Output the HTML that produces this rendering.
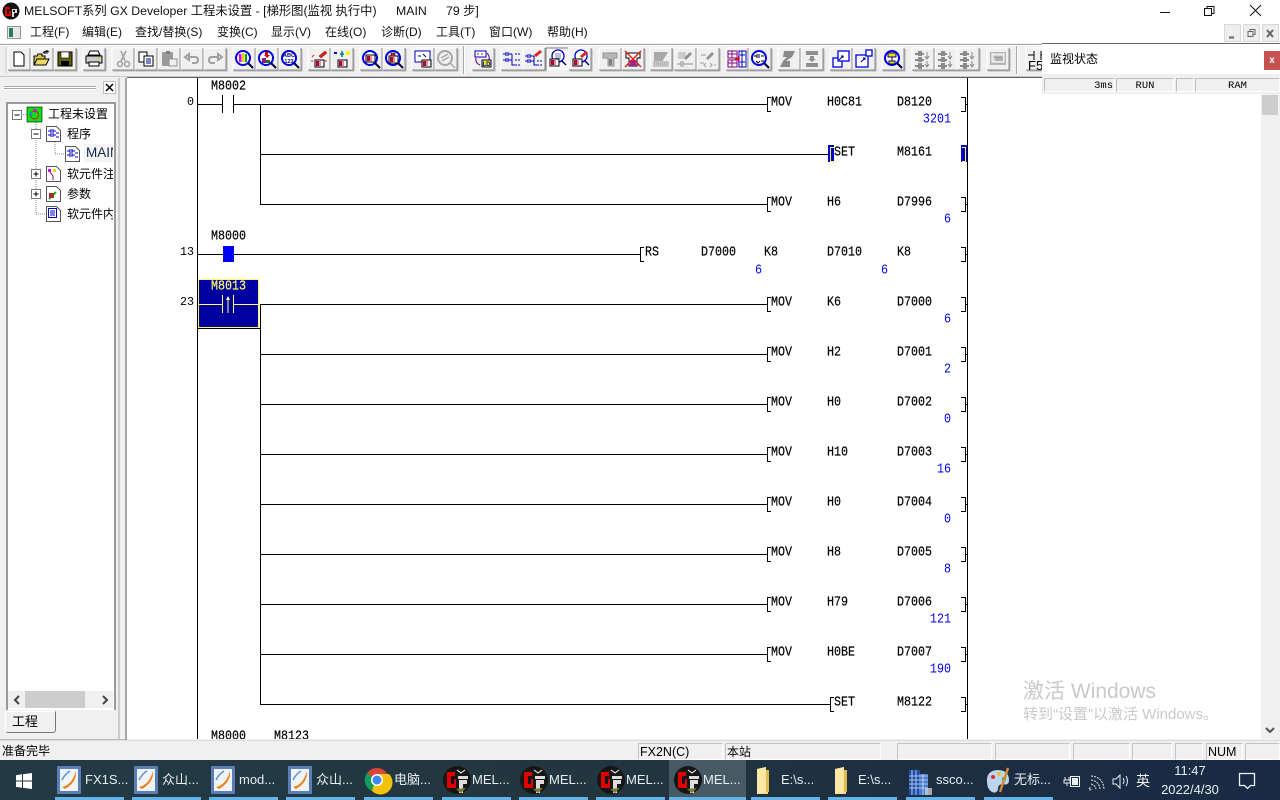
<!DOCTYPE html>
<html><head><meta charset="utf-8"><style>
*{box-sizing:border-box}
html,body{margin:0;padding:0;width:1280px;height:800px;overflow:hidden;background:#f0f0f0}
body{position:relative;font-family:"Liberation Sans","Noto Sans CJK SC",sans-serif;font-size:12px;color:#000}
.a{position:absolute;white-space:nowrap}
.m{position:absolute;top:24px;line-height:16px;font-size:12px;color:#111}
.c{position:absolute;top:743px;height:17px;border:1px solid #c4c4c4;border-right-color:#fff;border-bottom-color:#fff;line-height:16px;font-size:13px;padding-left:1px;overflow:hidden}
.t{position:absolute;top:771px;line-height:18px;font-size:13px;color:#e8eef2;white-space:nowrap}
.u{position:absolute;top:797px;height:3px;background:#63b3e8}
svg text{white-space:pre}
.lad text{font-family:"Liberation Mono",monospace;font-size:11.7px;fill:#000;stroke:#000;stroke-width:.15px;transform-box:fill-box;transform-origin:center;transform:translateY(-1px) scaleY(1.2)}
.lad .v{fill:#0000f0;stroke:none;text-anchor:end;transform:scaleY(1.15)}
.lad .n{text-anchor:end;stroke:none;transform:translateY(-1px)}
.lad .y{fill:#ffff60;stroke:#ffff60}
</style></head><body>

<!-- title + menu -->
<div class="a" style="left:0;top:0;width:1280px;height:44px;background:#fff"></div>
<svg class="a" style="left:2px;top:2px" width="18" height="18" viewBox="0 0 18 18"><circle cx="9" cy="9" r="8.500" fill="#111"/><path d="M3 5h5v2H5v5h2V9h2v5H3z" fill="#e00000"/><path d="M10 7h5v4h-3v4h-2z" fill="#ddd"/><rect x="11" y="8" width="2" height="2" fill="#111"/></svg>
<div class="a" style="left:24px;top:3px;line-height:17px;font-size:12.300px;color:#111">MELSOFT系列 GX Developer 工程未设置 - [梯形图(监视 执行中)</div>
<div class="a" style="left:396px;top:3px;line-height:17px;font-size:12.300px;color:#111">MAIN</div>
<div class="a" style="left:446px;top:3px;line-height:17px;font-size:12.300px;color:#111">79 步]</div>
<svg class="a" style="left:1150px;top:0" width="130" height="24"><path d="M10 12.500h10" stroke="#111" fill="none"/><path d="M54.500 8.500h7v7h-7zM57 8.500v-2h7v7h-2.500" stroke="#111" fill="none"/><path d="M100 5l11 11M111 5l-11 11" stroke="#111" fill="none"/></svg>

<svg class="a" style="left:7px;top:25px" width="15" height="15"><rect x="0.500" y="1.500" width="13" height="12" fill="#e8e8e8" stroke="#8a9aa0"/><rect x="2" y="3" width="4" height="9" fill="#2c7a5a"/><rect x="7" y="3" width="5" height="9" fill="#dfe8ee"/></svg>
<div class="m" style="left:30px">工程(F)</div><div class="m" style="left:82px">编辑(E)</div><div class="m" style="left:135px">查找/替换(S)</div><div class="m" style="left:217px">变换(C)</div><div class="m" style="left:271px">显示(V)</div><div class="m" style="left:325px">在线(O)</div><div class="m" style="left:381px">诊断(D)</div><div class="m" style="left:436px">工具(T)</div><div class="m" style="left:489px">窗口(W)</div><div class="m" style="left:547px">帮助(H)</div>

<svg class="a" style="left:1222px;top:24px" width="58" height="19"><g fill="#eee" stroke="#d8d8d8"><rect x="2.500" y="0.500" width="16" height="17"/><rect x="21.500" y="0.500" width="16" height="17"/><rect x="40.500" y="0.500" width="16" height="17"/></g><path d="M7 13.500h5" stroke="#666" stroke-width="2"/><path d="M26 7.500h5v5h-5zM28 7.500v-2h5v5h-2" stroke="#666" fill="none"/><path d="M45 6l6 7M51 6l-6 7" stroke="#666" stroke-width="2"/></svg>

<!-- toolbar -->
<svg class="a" style="left:0;top:43px" width="1280" height="36" viewBox="0 43 1280 36">
<defs>
<g id="b"><rect x="-11" y="-11" width="22" height="22" fill="#f0f0f0"/><path d="M-11 11V-11H11" fill="none" stroke="#fff"/><path d="M-11 11H11V-11" fill="none" stroke="#8c8c8c"/><path d="M-10 12H12V-10" fill="none" stroke="#b0b0b0"/></g>
<g id="z"><circle cx="-1" cy="-1" r="7" fill="#fff" stroke="#0000e0" stroke-width="2"/><path d="M4 4l5 5" stroke="#000040" stroke-width="2"/></g>
<g id="r"><rect x="-4" y="0" width="9" height="7" fill="#f8f8f8" stroke="#000"/><rect x="-3" y="1" width="3" height="5" fill="#b00030"/><rect x="0" y="1" width="2" height="5" fill="#e090a0"/></g>
<g id="g1"><path d="M-8-5h4M-2-5h3M-8 1h4M-2 1h3M-8 7h4M-2 7h3M-4-8v5M-2-8v5M-4-2v5M-2-2v5M-4 4v6M-2 4v6" stroke="#8a8a8a" stroke-width="2" fill="none"/><path d="M4-7v6M2-3l2 3 2-3M4 2v6M2 5l2 3 2-3" stroke="#8a8a8a" fill="none"/></g>
</defs>
<rect x="0" y="43" width="1280" height="36" fill="#f0f0f0"/>
<path d="M0 44.500H1042" stroke="#a8a8a8"/><path d="M0 45.500H1042" stroke="#fff"/>
<path d="M0 76.500H1042" stroke="#c8c8c8"/><path d="M127 77.500H1042" stroke="#606060"/>
<path d="M6 47v26" stroke="#c8c8c8"/><path d="M463.500 46v28" stroke="#a8a8a8"/><path d="M464.500 46v28" stroke="#fff"/><path d="M1016.500 46v28" stroke="#a8a8a8"/><path d="M1017.500 46v28" stroke="#fff"/>

<g transform="translate(19,59)"><use href="#b"/><path d="M-5-7h7l3 3v11h-10z" fill="#fff" stroke="#000"/></g>
<g transform="translate(42,59)"><use href="#b"/><path d="M-8 6V-3h3l1-2h4v2h3v9z" fill="#d8c850" stroke="#000"/><path d="M-8 6l3-6h12l-3 6z" fill="#e8d860" stroke="#000"/><path d="M1-6q3-3 6-1M5-9v3h-3" stroke="#000" fill="none"/></g>
<g transform="translate(65,59)"><use href="#b"/><rect x="-7" y="-7" width="14" height="14" fill="#606000" stroke="#000"/><rect x="-4" y="-7" width="8" height="6" fill="#fff" stroke="#000" stroke-width=".6"/><rect x="-4" y="2" width="8" height="5" fill="#000"/></g>
<g transform="translate(94,59)"><use href="#b"/><path d="M-4-8h8l2 4h-12z" fill="#fff" stroke="#000"/><rect x="-8" y="-3" width="16" height="7" fill="#ccc" stroke="#000"/><rect x="-5" y="3" width="10" height="4" fill="#fff" stroke="#000"/><path d="M3-1h3" stroke="#cc0"/></g>
<g transform="translate(123,59)"><use href="#b"/><path d="M-2-8L2 2M3-8L-2 2" stroke="#a0a0a0" stroke-width="1.500" fill="none"/><circle cx="-3" cy="5" r="2.500" fill="none" stroke="#a0a0a0" stroke-width="1.500"/><circle cx="4" cy="5" r="2.500" fill="none" stroke="#a0a0a0" stroke-width="1.500"/></g>
<g transform="translate(146,59)"><use href="#b"/><rect x="-7" y="-7" width="8" height="10" fill="#fff" stroke="#000"/><rect x="-2" y="-3" width="9" height="10" fill="#fff" stroke="#000"/><path d="M0-0h5M0 2h5M0 4h5" stroke="#00008a"/></g>
<g transform="translate(169,59)"><use href="#b"/><rect x="-7" y="-7" width="11" height="14" fill="#9a9a9a" rx="1"/><rect x="-3" y="-8" width="4" height="3" fill="#808080"/><rect x="0" y="0" width="8" height="7" fill="#f0f0f0" stroke="#909090"/></g>
<g transform="translate(192,59)"><use href="#b"/><path d="M-7-2l4-3v6zM-4-2h7q3 0 3 3t-3 3h-3" fill="none" stroke="#a0a0a0" stroke-width="2"/></g>
<g transform="translate(215,59)"><use href="#b"/><path d="M7-2l-4-3v6zM4-2h-7q-3 0-3 3t3 3h3" fill="none" stroke="#a0a0a0" stroke-width="2"/></g>
<g transform="translate(244,59)"><use href="#b"/><use href="#z"/><rect x="-5" y="-5" width="2.500" height="8" fill="#e000e0"/><rect x="-2" y="-6" width="2.500" height="9" fill="#e8d000"/><rect x="1" y="-5" width="2" height="8" fill="#00a000"/></g>
<g transform="translate(267,59)"><use href="#b"/><use href="#z"/><path d="M-2-7h3v3h2l-3 3-3-3h1z" fill="#e00000"/><rect x="-5" y="-1" width="4" height="5" fill="#802080"/><rect x="-1" y="1" width="4" height="3" fill="#207030"/></g>
<g transform="translate(290,59)"><use href="#b"/><use href="#z"/><text x="-1" y="-2" font-size="5.500" font-family="Liberation Sans" text-anchor="middle" font-weight="bold" fill="#000080">ABC</text><text x="-1" y="4" font-size="5.500" font-family="Liberation Sans" text-anchor="middle" font-weight="bold" fill="#000080">123</text></g>
<g transform="translate(319,59)"><use href="#b"/><use href="#r" y="1"/><path d="M0-3l6-5 2 2-6 5z" fill="#e02020" stroke="#800000" stroke-width=".5"/><path d="M-7-2l2-2M-8 2h2M6 2h2" stroke="#e02020"/></g>
<g transform="translate(342,59)"><use href="#b"/><use href="#r" y="1"/><path d="M0-8v6M-2-5h4" stroke="#008080" stroke-width="1.500"/><circle cx="6" cy="-6" r="2" fill="#f0f000"/><path d="M-8-6h3" stroke="#0000e0" stroke-width="2"/></g>
<g transform="translate(371,59)"><use href="#b"/><use href="#z"/><use href="#r" x="-1" y="-4"/></g>
<g transform="translate(394,59)"><use href="#b"/><use href="#z"/><use href="#r" x="-1" y="-3"/><path d="M-3-6h4v3h-4z" fill="#c03040" stroke="#000" stroke-width=".6"/></g>
<g transform="translate(423,59)"><use href="#b"/><rect x="-8" y="-8" width="15" height="11" fill="#fff" stroke="#0000c0"/><path d="M-5-3h3M0-5l3 3" stroke="#000080"/><use href="#r" x="3" y="1"/></g>
<g transform="translate(446,59)"><use href="#b"/><circle cx="-1" cy="-1" r="7" fill="none" stroke="#a8a8a8" stroke-width="2"/><path d="M4 4l5 5M-5-1l7-4M-4 2l7-4" stroke="#a8a8a8" stroke-width="1.500"/></g>
<g transform="translate(483,59)"><use href="#b"/><rect x="-8" y="-8" width="11" height="6" fill="#fff" stroke="#0000c0"/><path d="M-6-5h2M-2-5h2" stroke="#e00000"/><path d="M4-6q4 4 1 10M-7-1q-1 5 4 7" fill="none" stroke="#800080"/><rect x="-1" y="1" width="9" height="7" fill="#f0f000" stroke="#000080"/><text x="3.500" y="7" font-size="6" font-family="Liberation Sans" text-anchor="middle" font-weight="bold" fill="#0000a0">LD</text></g>
<g transform="translate(512,59)"><use href="#b"/><path d="M-9-5h3M-4-5h4M-9 1h3M-4 1h4M-6-7v4M-4-7v4M-6-1v4M-4-1v4M0-5v11h3" stroke="#0000c0" fill="none"/><path d="M3-5h5M3 1h5M3 6h5" stroke="#0000c0" stroke-dasharray="2 1"/></g>
<g transform="translate(534,59)"><use href="#b"/><path d="M-9-3h3M-4-3h4M-9 2h3M-4 2h4M-6-5v4M-4-5v4M-6 0v4M-4 0v4M0-3v9h3" stroke="#0000c0" fill="none"/><path d="M3 2h5M3 6h5" stroke="#0000c0" stroke-dasharray="2 1"/><path d="M0-4l6-5 2 2-6 5z" fill="#e02020"/></g>
<g transform="translate(557,59)"><rect x="-11" y="-11" width="22" height="22" fill="#f8f8f8"/><path d="M-11 11V-11H11" fill="none" stroke="#808080"/><circle cx="1" cy="-3" r="6" fill="#fff" stroke="#0000c0" stroke-width="1.300"/><path d="M-2-5h6M-2-3h6M-2-1h6" stroke="#8080c0"/><path d="M5 2l4 4" stroke="#000080" stroke-width="1.500"/><use href="#r" x="-3" y="0"/></g>
<g transform="translate(580,59)"><use href="#b"/><circle cx="1" cy="-3" r="6" fill="#fff" stroke="#0000c0" stroke-width="1.300"/><path d="M5 2l4 4" stroke="#000080" stroke-width="1.500"/><use href="#r" x="-3" y="0"/><path d="M0-3l6-5 2 2-6 5z" fill="#e02020"/></g>
<g transform="translate(610,59)"><use href="#b"/><path d="M-7-6h14v5h-3v8h-6v-8h-5z" fill="#b8b8b8" stroke="#909090"/><rect x="-1" y="0" width="3" height="6" fill="#808080"/></g>
<g transform="translate(633,59)"><use href="#b"/><path d="M-7-6h14v5h-3v8h-8v-8h-3z" fill="#fff" stroke="#000"/><rect x="-3" y="1" width="6" height="6" fill="#a020a0"/><path d="M-8-8L8 8M8-8L-8 8" stroke="#e02020" stroke-width="1.500"/></g>
<g transform="translate(661,59)"><use href="#b"/><path d="M-7-7L7-7 1 3H-7z" fill="#a8a8a8"/><path d="M-8 2h16v6h-16z" fill="#c8c8c8"/><path d="M-7 4h14M-7 6h14" stroke="#a0a0a0" stroke-dasharray="1 1"/></g>
<g transform="translate(685,59)"><use href="#b"/><path d="M-7-7h8v7h-8z" fill="#ccc"/><path d="M-1-1l6-6 2 2-6 6z" fill="#909090"/><path d="M-8 5h4M-2 5h10M-4 2v6M-2 2v6" stroke="#909090"/></g>
<g transform="translate(708,59)"><use href="#b"/><path d="M-2-1l6-6 2 2-6 6z" fill="#909090"/><path d="M-7-4h5M-8 4h4M-2 4l-2 2 2 2M2 4l2 2-2 2M6 6h2" stroke="#a0a0a0" fill="none"/></g>
<g transform="translate(737,59)"><use href="#b"/><rect x="-9" y="-8" width="9" height="7" fill="#fff" stroke="#800080"/><rect x="-9" y="1" width="9" height="7" fill="#fff" stroke="#800080"/><path d="M-5-8v7M-9-5h9M-5 1v7M-9 4h9" stroke="#800080"/><rect x="2" y="-8" width="7" height="16" fill="#fff" stroke="#0000c0"/><path d="M3-4h5M3 3h5M5-8v16" stroke="#0000c0"/><path d="M-2-1h3v-2l2 3-2 3v-2h-3z" fill="#f00000"/></g>
<g transform="translate(760,59)"><use href="#b"/><use href="#z"/><path d="M-6-3h3M1-3h3M-3-5v4M-1-5v4" stroke="#000"/><path d="M-4 2l2 2 2-2M1 2h3" stroke="#000" fill="none"/></g>
<g transform="translate(789,59)"><use href="#b"/><path d="M-5-8h11l-3 6h-3l3 0-6 4h4v6h-10l3-6h3l-3 0 4-4h-4z" fill="#8a8a8a"/></g>
<g transform="translate(812,59)"><use href="#b"/><rect x="-6" y="-8" width="12" height="4" fill="#909090"/><rect x="-6" y="4" width="12" height="4" fill="#909090"/><path d="M-2-3h4v3h2l-4 3-4-3h2z" fill="#909090"/></g>
<g transform="translate(841,59)"><use href="#b"/><rect x="-8" y="-1" width="9" height="9" fill="#fff" stroke="#0000e0" stroke-width="1.300"/><rect x="-3" y="-8" width="11" height="10" fill="#fff" stroke="#0000e0" stroke-width="1.300"/><path d="M-2 1l4-4M0-3h2v2" stroke="#000080" fill="none"/></g>
<g transform="translate(864,59)"><use href="#b"/><rect x="-8" y="-4" width="12" height="12" fill="#fff" stroke="#0000e0" stroke-width="1.300"/><rect x="2" y="-9" width="6" height="6" fill="#fff" stroke="#0000e0" stroke-width="1.300"/><path d="M-3 3l4-4M-1-1h2v2" stroke="#000080" fill="none"/></g>
<g transform="translate(893,59)"><use href="#b"/><use href="#z"/><rect x="-5" y="-6" width="8" height="4" fill="#f0e000" stroke="#000080"/><rect x="-4" y="2" width="6" height="3" fill="#f0e000" stroke="#000080"/><path d="M-1-2v4" stroke="#000080"/></g>
<g transform="translate(923,59)"><use href="#b"/><use href="#g1"/></g>
<g transform="translate(946,59)"><use href="#b"/><use href="#g1"/></g>
<g transform="translate(968,59)"><use href="#b"/><use href="#g1"/></g>
<g transform="translate(998,59)"><use href="#b"/><rect x="-8" y="-7" width="16" height="13" fill="#b4b4b4"/><rect x="-6" y="-5" width="12" height="8" fill="#d8d8d8" stroke="#fff"/><path d="M-4-2h8v4M-2-2v4M0-2v4M2-2v4" stroke="#8a8a8a" fill="none"/></g>
<g transform="translate(1037,59)"><use href="#b"/><path d="M-9-4H-3M-3-8V1M4-8V1M4-4H9" stroke="#000" fill="none"/><text x="-9" y="11" font-size="13" font-family="Liberation Sans">F5</text></g>
</svg>

<!-- left panel -->
<div class="a" style="left:120px;top:78px;width:7px;height:662px;background:#f0f0f0"></div>
<div class="a" style="left:125px;top:78px;width:2px;height:662px;background:#a8a8a8"></div>
<svg class="a" style="left:0;top:78px" width="125" height="662">
<path d="M4 8.500H96M4 10.500H96" stroke="#a8a8a8"/><path d="M4 9.500H96M4 11.500H96" stroke="#fff"/>
<rect x="103.500" y="3.500" width="12" height="12" fill="#fff" stroke="#c0c0c0"/><path d="M106 6l7 7M113 6l-7 7" stroke="#000" stroke-width="1.500"/>
<rect x="6" y="24" width="110" height="608" fill="#fff"/><path d="M7 632V25H115V632" fill="none" stroke="#9a9a9a" stroke-width="2"/>
<rect x="118.500" y="0" width="1" height="662" fill="#a8a8a8"/>
</svg>
<div class="a" style="left:0;top:739px;width:125px;height:1px;background:#bbb"></div>

<!-- tree -->
<svg class="a" style="left:8px;top:102px" width="105" height="130" viewBox="8 102 105 130">
<g fill="none" stroke="#888" stroke-dasharray="1 1"><path d="M23 114.500h4M36 122v92M36 134h4M55 142v12h10M36 174h4M36 194h4M36 214h10"/></g>
<g fill="#fff" stroke="#777"><rect x="12.500" y="110.500" width="9" height="9"/><rect x="31.500" y="129.500" width="9" height="9"/><rect x="31.500" y="169.500" width="9" height="9"/><rect x="31.500" y="189.500" width="9" height="9"/></g>
<path d="M14.500 115h5M33.500 134h5M33.500 174h5M36 171.500v5M33.500 194h5M36 191.500v5" stroke="#000"/>
<rect x="27" y="107" width="15" height="15" fill="#10e010" stroke="#000" stroke-width=".6"/><circle cx="34.500" cy="115" r="4" fill="none" stroke="#d01040"/><path d="M29 114l2-2 2 2-2 2z" fill="#0090e0"/><path d="M33 108l4 2-2 3z" fill="#e000e0"/>
<g fill="#fff" stroke="#555"><path d="M46.500 126.500h10l4 4v11h-14z"/><path d="M65.500 146.500h10l4 4v11h-14z"/><path d="M46.500 166.500h10l4 4v11h-14z"/><path d="M46.500 186.500h10l4 4v11h-14z"/><path d="M46.500 206.500h10l4 4v11h-14z"/></g>
<g stroke="#0000c0" fill="none"><path d="M48 131h3M53 131h3M48 135h3M53 135h3M51 129v8M53 129v8M56 133h3M56 137h3"/><path d="M67 151h3M72 151h3M67 155h3M72 155h3M70 149v8M72 149v8M75 153h3M75 157h3"/><rect x="48.500" y="208.500" width="8" height="9"/><path d="M50 211h5M50 213h5M50 215h5"/></g>
<rect x="48" y="169" width="3" height="3" fill="#e000e0"/><rect x="53" y="169" width="3" height="3" fill="#e0e000"/><path d="M50 172l3 4v4" stroke="#800080" fill="none"/>
<path d="M49 199l7-7" stroke="#00c000" stroke-width="2"/><rect x="49" y="193" width="5" height="5" fill="#a03030"/>
</svg>
<div class="a" style="left:48px;top:106px;line-height:16px;font-size:12px;width:62px;overflow:hidden">工程未设置</div>
<div class="a" style="left:67px;top:126px;line-height:16px;font-size:12px">程序</div>
<div class="a" style="left:84px;top:144px;line-height:18px;font-size:13.500px;width:29px;overflow:hidden;background:#f4f4f4;padding-left:2px;color:#10284a">MAIN</div>
<div class="a" style="left:67px;top:166px;line-height:16px;font-size:12px;width:46px;overflow:hidden">软元件注释</div>
<div class="a" style="left:67px;top:186px;line-height:16px;font-size:12px">参数</div>
<div class="a" style="left:67px;top:206px;line-height:16px;font-size:12px;width:46px;overflow:hidden">软元件内存</div>
<div class="a" style="left:8px;top:691px;width:105px;height:17px;background:#f0f0f0"></div>
<div class="a" style="left:25px;top:691px;width:60px;height:17px;background:#cdcdcd"></div>
<svg class="a" style="left:8px;top:691px" width="105" height="17"><path d="M11 5l-4 4 4 4M95 5l4 4-4 4" stroke="#444" stroke-width="2" fill="none"/></svg>
<div class="a" style="left:5px;top:711px;width:51px;height:22px;background:#f0f0f0;border:1px solid #fff;border-right:1.500px solid #777;border-bottom:1.500px solid #777;border-radius:0 0 3px 3px;line-height:20px;padding-left:6px;font-size:13px">工程</div>

<!-- ladder -->
<svg class="a lad" style="left:127px;top:78px" width="1134" height="661" viewBox="127 78 1134 661">
<rect x="127" y="78" width="1134" height="661" fill="#fff"/>
<g stroke="#000" fill="none">
<path d="M197.500 78V739M967.500 78V739M260.500 104V204.500M260.500 304V704.500"/>
<path d="M198 104.500H222M233 104.500H767M260 154.500H830M260 204.500H767M198 254.500H640M260 304.500H767M260 354.500H767M260 404.500H767M260 454.500H767M260 504.500H767M260 554.500H767M260 604.500H767M260 654.500H767M260 704.500H830"/>
<path d="M222.500 95V113M233.500 95V113"/>
</g>
<rect x="223" y="246" width="11" height="16" fill="#0000f0"/>
<path d="M234 254.500H240" stroke="#000"/>
<rect x="198" y="279" width="61" height="49" fill="#0000a0"/>
<rect x="198.500" y="279.500" width="60" height="48" fill="none" stroke="#ffff60"/>
<rect x="197" y="328" width="63" height="1" fill="#000"/>
<path d="M198 304.500H222M233 304.500H259M222.500 295V313M233.500 295V313M228 298V313" stroke="#ffff80" fill="none"/>
<path d="M228 296l-2 4h4z" fill="#ffff80"/>
<rect x="828" y="145" width="6" height="17" fill="#0000d0"/><rect x="961" y="145" width="6" height="17" fill="#0000d0"/>
<!-- brackets -->
<g fill="none" stroke="#000">
<path d="M771 97.500H767.500V111.500H771M771 197.500H767.500V211.500H771M644 247.500H640.500V261.500H644M771 297.500H767.500V311.500H771M771 347.500H767.500V361.500H771M771 397.500H767.500V411.500H771M771 447.500H767.500V461.500H771M771 497.500H767.500V511.500H771M771 547.500H767.500V561.500H771M771 597.500H767.500V611.500H771M771 647.500H767.500V661.500H771M834 697.500H830.500V711.500H834"/>
<path d="M961 97.500H965.500V111.500H961M961 197.500H965.500V211.500H961M961 247.500H965.500V261.500H961M961 297.500H965.500V311.500H961M961 347.500H965.500V361.500H961M961 397.500H965.500V411.500H961M961 447.500H965.500V461.500H961M961 497.500H965.500V511.500H961M961 547.500H965.500V561.500H961M961 597.500H965.500V611.500H961M961 647.500H965.500V661.500H961M961 697.500H965.500V711.500H961"/>
<path d="M965 104.500H967M965 204.500H967M965 254.500H967M965 304.500H967M965 354.500H967M965 404.500H967M965 454.500H967M965 504.500H967M965 554.500H967M965 604.500H967M965 654.500H967M965 704.500H967"/>
</g>
<path d="M834 147.500H830.500V161.500H834M962 147.500H965.500V161.500H962" fill="none" stroke="#ffff40"/>
<text class="n" x="194" y="106">0</text><text class="n" x="194" y="256">13</text><text class="n" x="194" y="306">23</text>
<text x="211" y="90">M8002</text><text x="211" y="240">M8000</text><text class="y" x="211" y="290">M8013</text>
<text x="211" y="740">M8000</text><text x="274" y="740">M8123</text>
<text x="771" y="106">MOV</text><text x="827" y="106">H0C81</text><text x="897" y="106">D8120</text><text class="v" x="951" y="122">3201</text>
<text x="834" y="156">SET</text><text x="897" y="156">M8161</text>
<text x="771" y="206">MOV</text><text x="827" y="206">H6</text><text x="897" y="206">D7996</text><text class="v" x="951" y="222">6</text>
<text x="645" y="256">RS</text><text x="701" y="256">D7000</text><text x="764" y="256">K8</text><text x="827" y="256">D7010</text><text x="897" y="256">K8</text><text class="v" x="762" y="273">6</text><text class="v" x="888" y="273">6</text>
<text x="771" y="306">MOV</text><text x="827" y="306">K6</text><text x="897" y="306">D7000</text><text class="v" x="951" y="322">6</text>
<text x="771" y="356">MOV</text><text x="827" y="356">H2</text><text x="897" y="356">D7001</text><text class="v" x="951" y="372">2</text>
<text x="771" y="406">MOV</text><text x="827" y="406">H0</text><text x="897" y="406">D7002</text><text class="v" x="951" y="422">0</text>
<text x="771" y="456">MOV</text><text x="827" y="456">H10</text><text x="897" y="456">D7003</text><text class="v" x="951" y="472">16</text>
<text x="771" y="506">MOV</text><text x="827" y="506">H0</text><text x="897" y="506">D7004</text><text class="v" x="951" y="522">0</text>
<text x="771" y="556">MOV</text><text x="827" y="556">H8</text><text x="897" y="556">D7005</text><text class="v" x="951" y="572">8</text>
<text x="771" y="606">MOV</text><text x="827" y="606">H79</text><text x="897" y="606">D7006</text><text class="v" x="951" y="622">121</text>
<text x="771" y="656">MOV</text><text x="827" y="656">H0BE</text><text x="897" y="656">D7007</text><text class="v" x="951" y="672">190</text>
<text x="834" y="706">SET</text><text x="897" y="706">M8122</text>
</svg>

<!-- right scroll -->
<div class="a" style="left:1261px;top:94px;width:19px;height:646px;background:#f0f0f0"></div>
<div class="a" style="left:1262px;top:95px;width:16px;height:20px;background:#cdcdcd"></div>
<svg class="a" style="left:1261px;top:722px" width="19" height="17"><path d="M5 6l4 4 4-4" stroke="#555" stroke-width="2" fill="none"/></svg>

<!-- monitor panel -->
<div class="a" style="left:1042px;top:43px;width:238px;height:51px;background:#f0f0f0;border-top:1px solid #666"></div>
<div class="a" style="left:1042px;top:44px;width:238px;height:30px;background:#fff"></div>
<div class="a" style="left:1050px;top:51px;line-height:16px;font-size:12px">监视状态</div>
<div class="a" style="left:1264px;top:51px;width:16px;height:19px;background:#c75050;color:#fff;font-size:10px;font-weight:bold;line-height:19px;text-align:center">x</div>
<div class="a" style="left:1044px;top:78px;width:71px;height:14px;border:1px solid #bdbdbd;border-right-color:#fff;border-bottom-color:#fff;font:10.500px/14px 'Liberation Mono',monospace;text-align:right;padding-right:1px">3ms</div>
<div class="a" style="left:1116px;top:78px;width:58px;height:14px;border:1px solid #bdbdbd;border-right-color:#fff;border-bottom-color:#fff;font:10.500px/14px 'Liberation Mono',monospace;text-align:center">RUN</div>
<div class="a" style="left:1176px;top:78px;width:18px;height:14px;border:1px solid #bdbdbd;border-right-color:#fff;border-bottom-color:#fff"></div>
<div class="a" style="left:1195px;top:78px;width:85px;height:14px;border:1px solid #bdbdbd;border-right-color:#fff;border-bottom-color:#fff;font:10.500px/14px 'Liberation Mono',monospace;text-align:center">RAM</div>

<!-- watermark -->
<div class="a" style="left:1023px;top:679px;font-size:21px;line-height:26px;color:#c9c9c9">激活 Windows</div>
<div class="a" style="left:1023px;top:706px;font-size:15px;line-height:18px;color:#c9c9c9">转到“设置”以激活 Windows。</div>

<!-- status bar -->
<div class="a" style="left:0;top:740px;width:1280px;height:20px;background:#f0f0f0;border-top:1px solid #dcdcdc"></div>
<div class="a" style="left:2px;top:743px;line-height:17px;font-size:12px">准备完毕</div>
<div class="c" style="left:638px;width:85px;font-size:12.500px">FX2N(C)</div>
<div class="c" style="left:725px;width:156px;font-size:12px">本站</div>
<div class="c" style="left:897px;width:95px"></div>
<div class="c" style="left:995px;width:75px"></div>
<div class="c" style="left:1073px;width:57px"></div>
<div class="c" style="left:1132px;width:40px"></div>
<div class="c" style="left:1175px;width:28px"></div>
<div class="c" style="left:1206px;width:37px;font-size:12.500px">NUM</div>
<div class="c" style="left:1245px;width:35px"></div>

<!-- taskbar -->
<div class="a" style="left:0;top:760px;width:1280px;height:40px;background:linear-gradient(90deg,#233a44 0%,#22363f 45%,#1c2e42 75%,#192a44 100%)"></div>
<div class="a" style="left:669px;top:760px;width:77px;height:40px;background:#465a64"></div>
<svg class="a" style="left:15px;top:772px" width="18" height="18"><path d="M1 3.200l6-.9V8.500H1zM8 2.200L17 1v7.500H8zM1 9.500h6v6.300l-6-.9zM8 9.500h9V17l-9-1.200z" fill="#fff"/></svg>
<div class="u" style="left:55px;width:69px"></div><div class="u" style="left:132px;width:69px"></div><div class="u" style="left:209px;width:69px"></div><div class="u" style="left:286px;width:69px"></div><div class="u" style="left:364px;width:69px"></div><div class="u" style="left:442px;width:69px"></div><div class="u" style="left:519px;width:69px"></div><div class="u" style="left:596px;width:69px"></div><div class="u" style="left:669px;width:77px"></div><div class="u" style="left:751px;width:69px"></div><div class="u" style="left:828px;width:69px"></div><div class="u" style="left:906px;width:69px"></div><div class="u" style="left:984px;width:69px"></div>

<svg class="a" style="left:0;top:760px" width="1060" height="40">
<defs>
<g id="ap"><rect x="0" y="0" width="24" height="28" rx="1" fill="#5b7db8"/><rect x="3" y="3" width="18" height="22" fill="#eef4fa"/><path d="M5 21Q15 19 19 5Q20 16 8 23z" fill="#f08010"/><path d="M5 14Q8 8 13 5" stroke="#6090c8" stroke-width="1.500" fill="none"/></g>
<g id="me"><circle cx="13" cy="14" r="14" fill="#161616"/><path d="M3 6h8v4H7v8h3v-5h2v9H3z" fill="#e00000"/><path d="M14 10h10v3H14zM15 14h8v4h-4v9h-4z" fill="#ddd"/><path d="M13 4l4 3 4-3" stroke="#fff" fill="none"/><path d="M12 23l5 4 5-5z" fill="#7a7a30"/></g>
<g id="fo"><path d="M2 3l9-2v3l2 0v24H2z" fill="#f4d67c"/><path d="M2 3l9-2v26l-9 1z" fill="#fbe7a6"/><path d="M11 4h3v22h-3z" fill="#e3b94d"/></g>
</defs>
<use href="#ap" x="57" y="6"/><use href="#ap" x="134" y="6"/><use href="#ap" x="211" y="6"/><use href="#ap" x="288" y="6"/>
<circle cx="377" cy="20" r="12" fill="#db4437"/><path d="M377 20L367 13A12 12 0 0 0 372 31z" fill="#0f9d58"/><path d="M377 14H389A12 12 0 0 1 372 31z" fill="#f4c20d"/><circle cx="377" cy="20" r="6" fill="#fff"/><circle cx="377" cy="20" r="4.500" fill="#4285f4"/>
<use href="#me" x="444" y="6"/><use href="#me" x="521" y="6"/><use href="#me" x="598" y="6"/><use href="#me" x="675" y="6"/>
<use href="#fo" x="755" y="6"/><use href="#fo" x="833" y="6"/>
<rect x="909" y="10" width="11" height="25" fill="#1f4fa8"/><rect x="919" y="14" width="9" height="21" fill="#4a7cd0"/><path d="M909 16h19M909 20h19M909 24h19M909 28h19M912 10v25M916 10v25M923 14v21" stroke="#cfe0f5" stroke-width=".8"/><rect x="925" y="28" width="7" height="7" fill="#ddd" opacity=".7"/>
<path d="M987 22Q986 11 997 10Q1009 10 1009 20Q1009 26 1003 24Q998 24 998 29Q997 34 992 32Q987 29 987 22z" fill="#bcd4ee"/><circle cx="993" cy="17" r="2" fill="#e03020"/><circle cx="999" cy="14" r="2" fill="#f0c020"/><circle cx="1004" cy="19" r="2" fill="#30a050"/><path d="M1008 8L1000 32" stroke="#d08a30" stroke-width="2.500"/>
</svg>
<div class="t" style="left:85px">FX1S...</div><div class="t" style="left:162px">众山...</div><div class="t" style="left:239px">mod...</div><div class="t" style="left:316px">众山...</div><div class="t" style="left:394px">电脑...</div><div class="t" style="left:472px">MEL...</div><div class="t" style="left:549px">MEL...</div><div class="t" style="left:626px">MEL...</div><div class="t" style="left:703px">MEL...</div><div class="t" style="left:781px">E:\s...</div><div class="t" style="left:858px">E:\s...</div><div class="t" style="left:936px">ssco...</div><div class="t" style="left:1014px">无标...</div>

<svg class="a" style="left:1060px;top:770px" width="75" height="22" fill="none" stroke="#e8eef2"><path d="M5 7v3M9 7v3M4 10h6v3H4zM7 13v3"/><rect x="10.500" y="6.500" width="9" height="10"/><rect x="12" y="8" width="6" height="7" fill="#e8eef2" stroke="none"/><path d="M31 19a1 1 0 1 1 0-.1M31 14q4 1 5 5M31 10q8 1 9 9M31 6q12 1 13 13" stroke-dasharray="2 1"/><path d="M53 9h3l4-4v13l-4-4h-3zM63 8q2 3 0 6M66 6q3 5 0 10"/></svg>
<div class="a" style="left:1136px;top:772px;font-size:14px;line-height:18px;color:#f0f4f6">英</div>
<div class="a" style="left:1150px;top:762px;width:80px;text-align:center;font-size:13px;line-height:18px;color:#e8eef2">11:47</div>
<div class="a" style="left:1150px;top:781px;width:80px;text-align:center;font-size:13px;line-height:18px;color:#e8eef2">2022/4/30</div>
<svg class="a" style="left:1238px;top:771px" width="20" height="20"><path d="M1.500 2.500h15v12h-4l-3 3-3-3h-5z" fill="none" stroke="#f0f4f6" stroke-width="1.300"/></svg>
</body></html>
